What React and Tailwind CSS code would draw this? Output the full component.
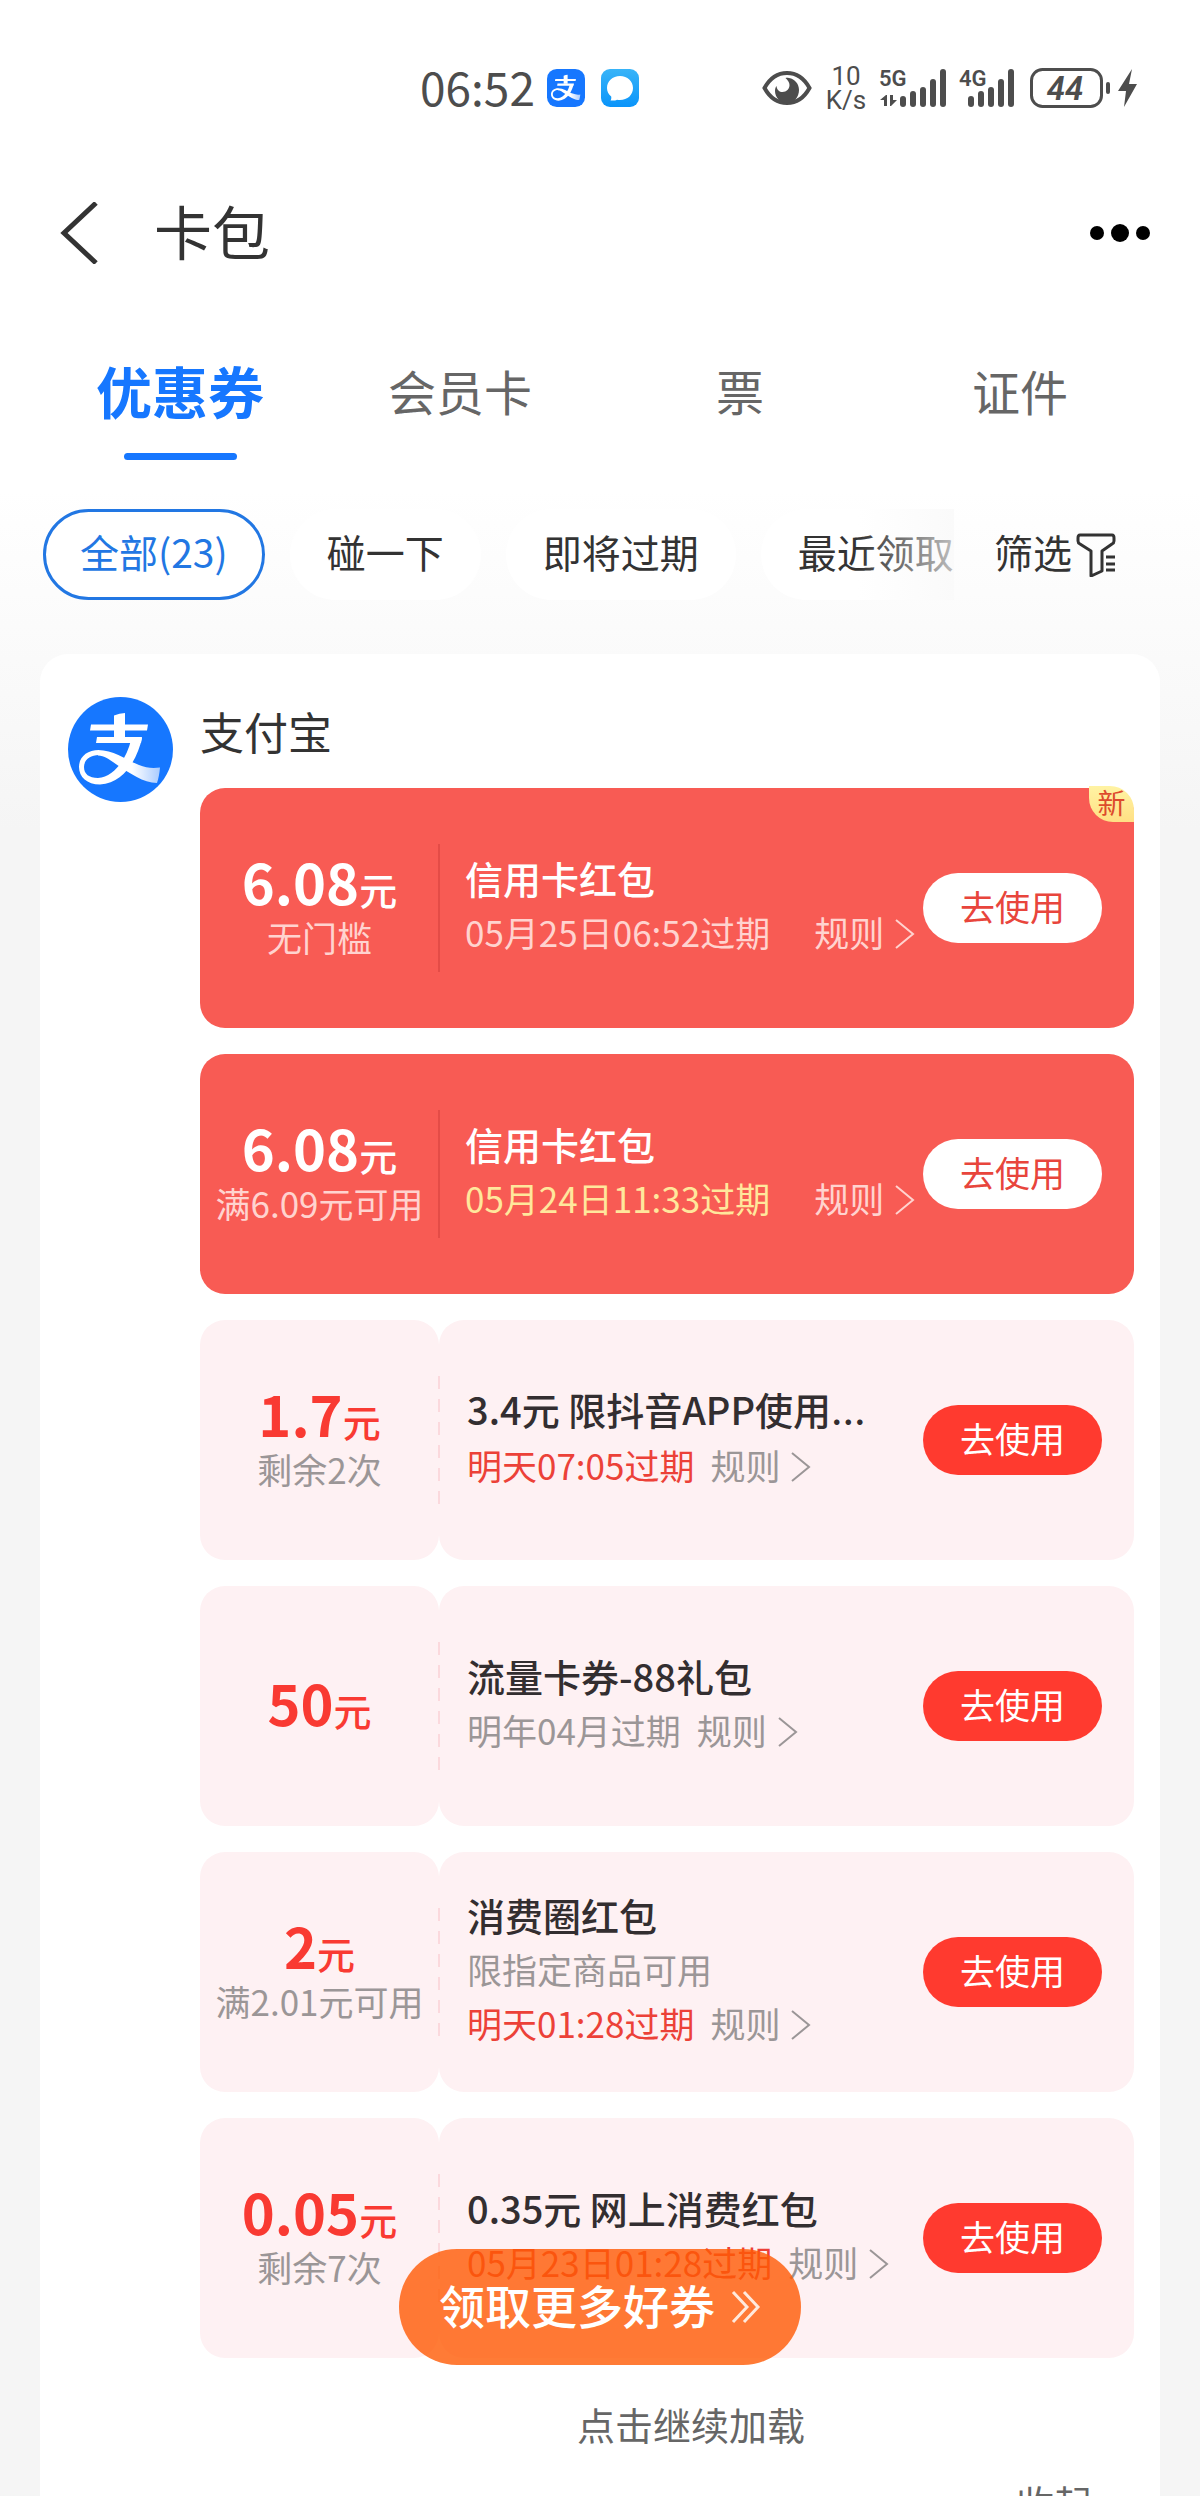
import { useState } from 'react';

const tabs = ['优惠券', '会员卡', '票', '证件'];
const filters = ['全部(23)', '碰一下', '即将过期', '最近领取'];

const coupons = [
  { id: 1, solid: true, isNew: true, amount: '6.08', limit: '无门槛', title: '信用卡红包', expire: '05月25日06:52过期' },
  { id: 2, solid: true, soon: true, amount: '6.08', limit: '满6.09元可用', title: '信用卡红包', expire: '05月24日11:33过期' },
  { id: 3, soon: true, amount: '1.7', limit: '剩余2次', title: '3.4元 限抖音APP使用', clipped: true, expire: '明天07:05过期' },
  { id: 4, amount: '50', title: '流量卡券-88礼包', expire: '明年04月过期' },
  { id: 5, soon: true, amount: '2', limit: '满2.01元可用', title: '消费圈红包', note: '限指定商品可用', expire: '明天01:28过期' },
  { id: 6, soon: true, amount: '0.05', limit: '剩余7次', title: '0.35元 网上消费红包', expire: '05月23日01:28过期' },
];

const AlipayMark = ({ className, rounded }) => (
  <svg viewBox="0 0 105 105" className={className} aria-hidden="true">
    <defs>
      <linearGradient id="ribbon" x1="0" y1="0" x2="1" y2="0">
        <stop offset="0" stopColor="#fff" />
        <stop offset="0.55" stopColor="#fff" />
        <stop offset="1" stopColor="#a9cbff" />
      </linearGradient>
    </defs>
    {rounded ? (
      <rect width="105" height="105" rx="27" fill="#1677ff" />
    ) : (
      <circle cx="52.5" cy="52.5" r="52.5" fill="#1677ff" />
    )}
    <path d="M46 18.500q5.500-2.500 11-2.500v25h-11z" fill="#fff" />
    <path d="M23 27.500h57l-1 6H22zM29 40h45l-1 6H28z" fill="#fff" />
    <path
      d="M74 41C70 59 58 86 32 87.500 19 87.500 11 80 11 70 11 60 19 53 31 53l0 5C22 58 16 63 16 70c0 7 5 11 14 11C47 80 59 60 63 43z"
      fill="#fff"
    />
    <path
      d="M30 53c16 0 28 10 41 15 7 3 14 3.500 21 2.500-.500 6-1.500 11-3 15.500C75 86 62 76 50 68.500 42 63 37 58.500 30 58.500z"
      fill="url(#ribbon)"
    />
  </svg>
);

const Signal = ({ label, data }) => (
  <svg
    viewBox={data ? '0 0 66 40' : '0 0 56 40'}
    className={data ? 'h-10 w-[66px] overflow-visible' : 'h-10 w-[56px] overflow-visible'}
    fill="#4d4d4d"
    aria-label={label}
  >
    <text x="-1" y="18" fontSize="22" fontWeight="600" fontFamily="Roboto, sans-serif">{label}</text>
    {data && <path d="M4 38V32H0l6-5h1v11zM10 27v11h1l6-6h-4v-5z" />}
    <g transform={data ? 'translate(20 1)' : 'translate(8 1)'}>
      <rect x="0" y="27" width="6" height="11" rx="3" />
      <rect x="10" y="22" width="6" height="16" rx="3" />
      <rect x="20" y="18" width="6" height="20" rx="3" />
      <rect x="30" y="10" width="6" height="28" rx="3" />
      <rect x="40" y="0" width="6" height="38" rx="3" />
    </g>
  </svg>
);

const StatusBar = () => (
  <div className="flex h-[176px] items-center justify-between pl-[35%] pr-[62px] text-[#4d4d4d]">
    <div className="flex items-center gap-4">
      <span className="pb-1 text-[46px] leading-none">06:52</span>
      <AlipayMark rounded className="size-[38px] -ml-1" />
      <svg viewBox="0 0 38 38" className="size-[38px]" aria-hidden="true">
        <defs>
          <linearGradient id="message" x1="0" y1="0" x2="0" y2="1">
            <stop offset="0" stopColor="#38b4f8" />
            <stop offset="1" stopColor="#0a94fa" />
          </linearGradient>
        </defs>
        <rect width="38" height="38" rx="9" fill="url(#message)" />
        <path d="M19 7c7.500 0 13 5 13 12s-5.500 12-13 12c-1 0-2-.100-3-.300-1.500.800-4 1-6.500.800.700-1 1-2.500.700-4C7.500 25.500 6 22.500 6 19 6 12 11.500 7 19 7z" fill="#fff" />
      </svg>
    </div>
    <div className="flex items-center gap-[14px]">
      <svg viewBox="0 0 50 36" className="h-9 w-[50px]" aria-hidden="true">
        <path d="M2.500 18C8 8 16 3 25 3s17 5 22.500 15C42 28 34 33 25 33S8 28 2.500 18z" fill="none" stroke="#4d4d4d" strokeWidth="4" />
        <path d="M27 8c6 1 10 6 10 12 0 7-5 13-12 13S13 27 13 21c0-2 .500-4 1.500-5 .500 4 3 6 6 6 4 0 7-3 7-7 0-3-2-5-4-7 1-.300 2-.300 3.500 0z" fill="#4d4d4d" />
      </svg>
      <div className="flex w-[40px] flex-col items-center font-[Roboto] text-[26px] leading-[24px]">
        <span>10</span>
        <span>K/s</span>
      </div>
      <Signal label="5G" data />
      <Signal label="4G" />
      <svg viewBox="0 0 108 40" className="h-10 w-[108px]" fill="#4d4d4d" aria-label="44%">
        <rect x="1.500" y="1.500" width="70" height="37" rx="11" fill="none" stroke="#4d4d4d" strokeWidth="3" />
        <text x="35" y="32" fontSize="33" fontWeight="600" fontStyle="italic" fontFamily="Roboto, sans-serif" textAnchor="middle">44</text>
        <rect x="76" y="14" width="4" height="12" rx="2" />
        <path d="M102 1 88 23h8l-2 16 13-23h-8z" />
      </svg>
    </div>
  </div>
);

const Chevron = () => (
  <svg viewBox="0 0 20 30" className="mt-1 h-[30px] w-5" fill="none" stroke="currentColor" strokeWidth="2" aria-hidden="true">
    <path d="M1 1l17 14L1 29" />
  </svg>
);

const Coupon = ({ coupon }) => {
  const { solid, isNew, soon, amount, limit, title, clipped, note, expire } = coupon;

  let expireColor = 'text-[#9b9697]';
  if (solid) expireColor = soon ? 'text-[#ffe79c]' : 'text-[#ffd3cf]';
  else if (soon) expireColor = 'text-[#ec4138]';

  return (
    <li className={`relative flex h-60 ${solid ? 'rounded-[25px] bg-[#f85b54]' : ''}`}>
      <div className={`flex w-[239px] shrink-0 flex-col items-center justify-center whitespace-nowrap ${
        solid ? 'text-white' : 'rounded-[25px] bg-[#fef1f3] text-[#f93a32]'
      }`}>
        <p className="text-[38px] font-medium leading-[50px]">
          <span className="text-[56px] font-bold">{amount}</span>元
        </p>
        {limit && (
          <p className={`text-[35px] leading-[46px] ${solid ? 'text-[#ffd3cf]' : 'text-[#9b9697]'}`}>{limit}</p>
        )}
      </div>

      <div className={`relative flex min-w-0 flex-1 items-center justify-between pb-1.5 ${
        solid ? 'pl-[26px]' : 'rounded-[25px] bg-[#fef1f3] pl-7'
      }`}>
        <span className={`absolute -left-px top-14 h-32 ${
          solid
            ? 'w-[2px] bg-[#e44c47]'
            : 'w-[2px] bg-[repeating-linear-gradient(180deg,#fbd9dd_0_13px,transparent_13px_23px)]'
        }`} />
        <div className="whitespace-nowrap">
          <h3 className={`text-[38px] font-medium leading-[54px] ${solid ? 'text-white' : 'text-[#332e30]'}`}>
            {title}
            {clipped && <span className="font-[Inter]">…</span>}
          </h3>
          {note && <p className="text-[35px] leading-[54px] text-[#9b9697]">{note}</p>}
          <p className={`flex items-center text-[35px] leading-[54px] ${solid ? 'gap-11' : 'gap-4'}`}>
            <span className={expireColor}>{expire}</span>
            <a href="#rules" className={`flex items-center gap-[11px] ${solid ? 'text-[#ffd3cf]' : 'text-[#9b9697]'}`}>
              规则
              <Chevron />
            </a>
          </p>
        </div>
        <button
          type="button"
          className={`absolute right-8 top-[85px] h-[70px] w-[179px] rounded-full pb-1 text-[35px] ${
            solid ? 'bg-white text-[#e8453c]' : 'bg-[#ff3a2f] text-white'
          }`}
        >
          去使用
        </button>
      </div>

      {isNew && (
        <span className="absolute -top-0.5 right-0 flex h-9 w-[45px] items-center justify-center rounded-bl-[24px] rounded-tr-[24px] bg-gradient-to-b from-[#fff3a3] to-[#ffe084] pb-1 text-[28px] text-[#dd4a2c]">
          新
        </span>
      )}
    </li>
  );
};

const App = () => {
  const [activeTab, setActiveTab] = useState('优惠券');
  const [activeFilter, setActiveFilter] = useState('全部(23)');

  return (
    <div className="relative h-screen overflow-hidden bg-[linear-gradient(180deg,#fff_490px,#f5f5f5_830px)] font-['Noto_Sans_CJK_SC',sans-serif] text-[#333]">
      <StatusBar />

      <header className="flex h-[114px] items-center justify-between pl-[60px] pr-[50px]">
        <div className="flex items-center gap-[56px]">
          <button type="button" aria-label="返回">
            <svg viewBox="0 0 38 62" className="h-[62px] w-[38px]" fill="none" stroke="#333" strokeWidth="5">
              <path d="M36 1 4 31l32 30" />
            </svg>
          </button>
          <h1 className="pb-1.5 text-[58px] leading-none">卡包</h1>
        </div>
        <button type="button" aria-label="更多" className="flex items-center gap-[7px]">
          <span className="size-[14px] rounded-full bg-black" />
          <span className="size-[18px] rounded-full bg-black" />
          <span className="size-[14px] rounded-full bg-black" />
        </button>
      </header>

      <nav className="grid grid-cols-4 px-10 pt-[60px]">
        {tabs.map((tab) => (
          <button
            key={tab}
            type="button"
            onClick={() => setActiveTab(tab)}
            className={`flex h-[110px] flex-col items-center gap-[23px] leading-[80px] ${
              tab === activeTab ? 'text-[56px] font-bold text-[#1677ff]' : 'text-5xl text-[#666]'
            }`}
          >
            {tab}
            {tab === activeTab && <span className="h-[7px] w-[113px] rounded-full bg-[#1677ff]" />}
          </button>
        ))}
      </nav>

      <div className="flex items-center pl-[43px] pr-[84px] pt-[49px]">
        <div className="relative flex min-w-0 flex-1 gap-[25px] overflow-hidden">
          {filters.map((filter) => (
            <button
              key={filter}
              type="button"
              onClick={() => setActiveFilter(filter)}
              className={`h-[91px] shrink-0 whitespace-nowrap rounded-full bg-white pb-1.5 text-[39px] ${
                filter === activeFilter ? 'border-3 border-[#2277e3] px-[34px] text-[#2277e3]' : 'px-[37px]'
              }`}
            >
              {filter}
            </button>
          ))}
          <span className="pointer-events-none absolute inset-y-0 right-0 w-24 bg-gradient-to-r from-transparent to-[#f8f8f8]/70" />
        </div>
        <button type="button" className="ml-10 flex items-center gap-1 text-[39px]">
          <span className="pb-1.5">筛选</span>
          <svg viewBox="0 0 40 44" className="h-11 w-10" fill="none" stroke="#333" strokeWidth="3" aria-hidden="true">
            <path strokeLinejoin="round" d="M4 2h32q2 0 2 3v3q0 2-2 3L26 18v20l-11 5V18L4 11q-2-1-2-3V5q0-3 2-3z" />
            <path d="M30 24h9M30 31h9M30 37h9" />
          </svg>
        </button>
      </div>

      <main className="mx-10 mt-[54px] flex min-h-screen items-start gap-[27px] rounded-[28px] bg-white pl-7 pr-[26px] pt-[43px]">
        <AlipayMark className="size-[105px] shrink-0" />
        <section className="min-w-0 flex-1">
          <h2 className="mt-1 text-[44px] leading-[60px]">支付宝</h2>
          <ul className="mt-[27px] flex flex-col gap-[26px]">
            {coupons.map((coupon) => (
              <Coupon key={coupon.id} coupon={coupon} />
            ))}
          </ul>
          <button type="button" className="mt-9 block w-full pl-12 text-center text-[38px] leading-[60px] text-[#666]">
            点击继续加载
          </button>
          <button type="button" className="ml-auto mr-[42px] mt-[18px] block text-[38px] leading-[60px] text-[#666]">
            收起
          </button>
        </section>
      </main>

      <button
        type="button"
        className="absolute bottom-[131px] left-1/2 flex h-[116px] -translate-x-1/2 items-center gap-4 whitespace-nowrap rounded-full bg-[#ff5a04]/80 px-10 text-[46px] font-medium text-white"
      >
        <span className="pb-1.5">领取更多好券</span>
        <svg viewBox="0 0 30 34" className="h-[34px] w-[30px]" fill="none" stroke="#ffe9dc" strokeWidth="3" aria-hidden="true">
          <path d="M2 2l14 15L2 32M13 2l14 15-14 15" />
        </svg>
      </button>
    </div>
  );
};

export default App;
